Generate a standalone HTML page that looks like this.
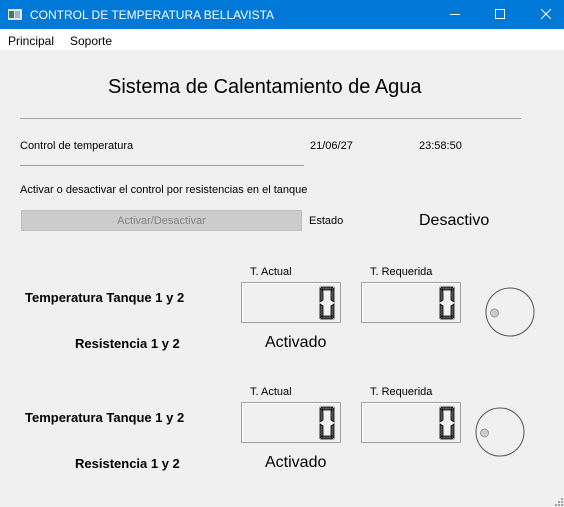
<!DOCTYPE html>
<html><head><style>
*{margin:0;padding:0;box-sizing:border-box}
body{width:564px;height:507px;background:#f0f0f0;font-family:"Liberation Sans",sans-serif;position:relative;overflow:hidden;color:#000}
.a{position:absolute;white-space:nowrap}
.s{font-size:11px}
.lcd{position:absolute;width:100px;height:41px;border:1px solid #a0a0a0;box-shadow:inset 1px 1px 0 #fff;background:#f0f0f0}
.lcd svg{position:absolute;right:3px;top:2px}
.b{font-weight:bold;font-size:13px}
</style></head><body>
<div class="a" style="left:0;top:0;width:564px;height:29px;background:#0078d7"></div>
<svg class="a" style="left:8px;top:9px" width="14" height="11"><rect x="0" y="0" width="14" height="11" fill="#dfe6ec"/><rect x="1" y="2" width="5" height="7" fill="#4a7a5a"/><rect x="7" y="2" width="5" height="7" fill="#9fb3c8"/></svg>
<div class="a" style="left:30px;top:8px;color:#fff;font-size:12px">CONTROL DE TEMPERATURA BELLAVISTA</div>
<svg class="a" style="left:430px;top:0" width="134" height="29" stroke="#fff" fill="none" stroke-width="1"><path d="M20 14.5H30"/><rect x="65.5" y="9.5" width="9" height="9"/><path d="M111 9L121 19M121 9L111 19"/></svg>
<div class="a" style="left:0;top:29px;width:564px;height:21px;background:#fff"></div>
<div class="a" style="left:8px;top:34px;font-size:12px">Principal</div>
<div class="a" style="left:70px;top:34px;font-size:12px">Soporte</div>
<div class="a" style="left:108px;top:76px;font-size:20px">Sistema de Calentamiento de Agua</div>
<div class="a" style="left:20px;top:118px;width:501px;height:1px;background:#a0a0a0"></div>
<div class="a s" style="left:20px;top:140px">Control de temperatura</div>
<div class="a s" style="left:310px;top:140px">21/06/27</div>
<div class="a s" style="left:419px;top:140px">23:58:50</div>
<div class="a" style="left:20px;top:165px;width:284px;height:1px;background:#a0a0a0"></div>
<div class="a s" style="left:20px;top:184px">Activar o desactivar el control por resistencias en el tanque</div>
<div class="a" style="left:21px;top:210px;width:281px;height:21px;background:#cccccc;border:1px solid #bfbfbf;color:#838383;font-size:11px;text-align:center;line-height:21px">Activar/Desactivar</div>
<div class="a s" style="left:309px;top:215px">Estado</div>
<div class="a" style="left:419px;top:212px;font-size:16px">Desactivo</div>

<div class="a s" style="left:250px;top:266px">T. Actual</div>
<div class="a s" style="left:370px;top:266px">T. Requerida</div>
<div class="lcd" style="left:241px;top:282px"><svg width="20" height="36"><path d="M4 2H16L14 5H6Z M3 3L6 6V15L3 17Z M17 3L14 6V15L17 17Z M3 19L6 21V30L3 33Z M17 19L14 21V30L17 33Z M6 31H14L16 34H4Z" fill="#555" stroke="#000" stroke-width=".8"/></svg></div>
<div class="lcd" style="left:361px;top:282px"><svg width="20" height="36"><path d="M4 2H16L14 5H6Z M3 3L6 6V15L3 17Z M17 3L14 6V15L17 17Z M3 19L6 21V30L3 33Z M17 19L14 21V30L17 33Z M6 31H14L16 34H4Z" fill="#555" stroke="#000" stroke-width=".8"/></svg></div>
<div class="a b" style="left:25px;top:290px">Temperatura Tanque 1 y 2</div>
<svg class="a" style="left:485px;top:287px" width="52" height="52"><circle cx="25" cy="25" r="24" fill="#f0f0f0" stroke="#555"/><circle cx="9.5" cy="26" r="4" fill="#ccc" stroke="#999"/></svg>
<div class="a b" style="left:75px;top:336px">Resistencia 1 y 2</div>
<div class="a" style="left:265px;top:334px;font-size:16px">Activado</div>

<div class="a s" style="left:250px;top:386px">T. Actual</div>
<div class="a s" style="left:370px;top:386px">T. Requerida</div>
<div class="lcd" style="left:241px;top:402px"><svg width="20" height="36"><path d="M4 2H16L14 5H6Z M3 3L6 6V15L3 17Z M17 3L14 6V15L17 17Z M3 19L6 21V30L3 33Z M17 19L14 21V30L17 33Z M6 31H14L16 34H4Z" fill="#555" stroke="#000" stroke-width=".8"/></svg></div>
<div class="lcd" style="left:361px;top:402px"><svg width="20" height="36"><path d="M4 2H16L14 5H6Z M3 3L6 6V15L3 17Z M17 3L14 6V15L17 17Z M3 19L6 21V30L3 33Z M17 19L14 21V30L17 33Z M6 31H14L16 34H4Z" fill="#555" stroke="#000" stroke-width=".8"/></svg></div>
<div class="a b" style="left:25px;top:410px">Temperatura Tanque 1 y 2</div>
<svg class="a" style="left:475px;top:407px" width="52" height="52"><circle cx="25" cy="25" r="24" fill="#f0f0f0" stroke="#555"/><circle cx="9.5" cy="26" r="4" fill="#ccc" stroke="#999"/></svg>
<div class="a b" style="left:75px;top:456px">Resistencia 1 y 2</div>
<div class="a" style="left:265px;top:454px;font-size:16px">Activado</div>
<svg class="a" style="left:554px;top:497px" width="10" height="10" fill="#a0a0a0"><rect x="7" y="1" width="2" height="2"/><rect x="4" y="4" width="2" height="2"/><rect x="7" y="4" width="2" height="2"/><rect x="1" y="7" width="2" height="2"/><rect x="4" y="7" width="2" height="2"/><rect x="7" y="7" width="2" height="2"/></svg>
</body></html>
